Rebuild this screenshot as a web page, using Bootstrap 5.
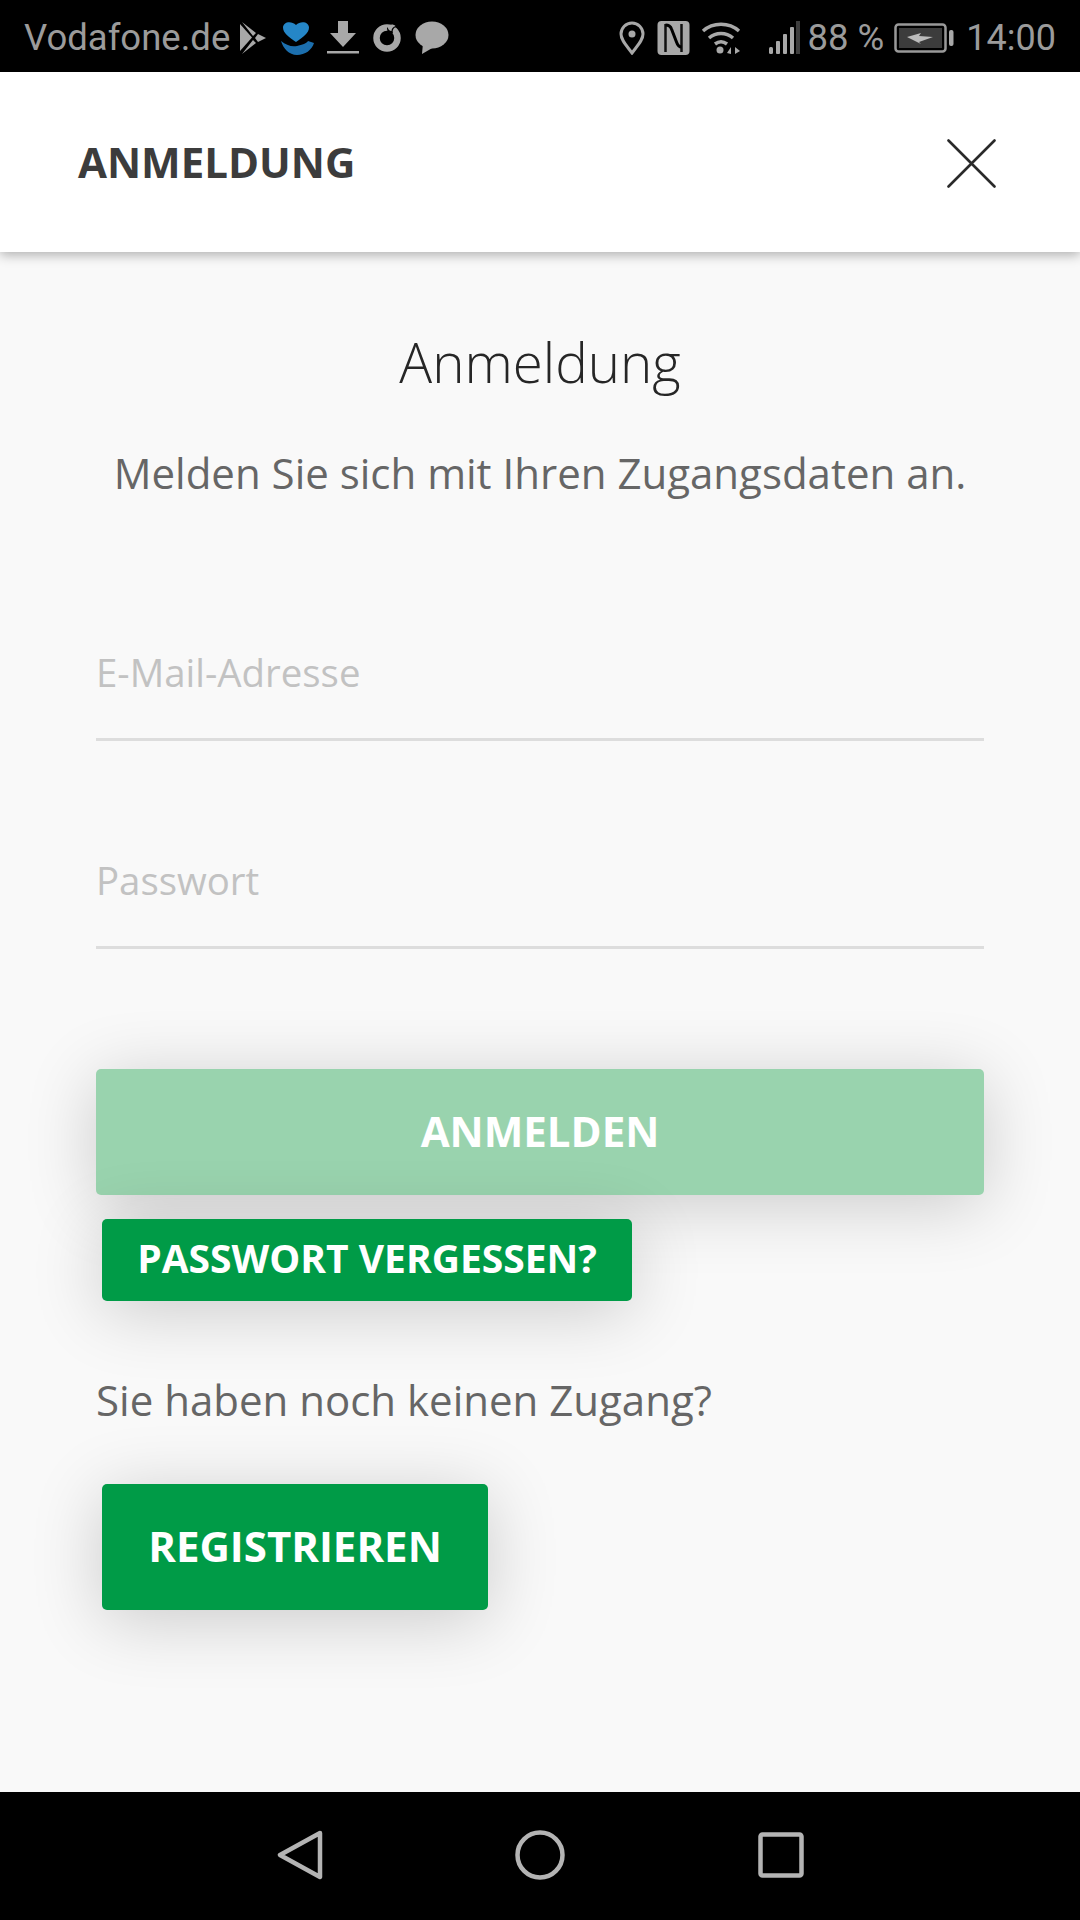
<!DOCTYPE html>
<html lang="de"><head><meta charset="utf-8"><title>Anmeldung</title>
<link href="https://cdn.jsdelivr.net/npm/bootstrap@5.3.0/dist/css/bootstrap.min.css" rel="stylesheet">
<style>
html,body{margin:0;height:1920px;overflow:hidden}
body{font-family:"Open Sans",sans-serif;background:#f9f9f9}
.app{height:1920px}
.sbar{height:72px;background:#000;color:#9b9b9b;font-family:Roboto,sans-serif;font-size:36.5px;padding:4px 24px 0;flex:none}
.sbar svg{display:block;flex:none}
.clk{font-size:36px}
.m8{margin-left:8px}.m9{margin-left:9px}.m10{margin-left:10px}.m11{margin-left:11px}.m12{margin-left:12px}.m13{margin-left:13px}.m14{margin-left:14px}.m27{margin-left:27px}
.topb{height:180px;background:#fff;box-shadow:0 3px 11px rgba(0,0,0,.3);padding:0 84px 0 78px;flex:none;position:relative;z-index:1}
.topb-t{font-size:42px;font-weight:700;color:#3c3c3c;line-height:1}
.closer{margin-top:2px}
.ctn{padding:0 96px;min-height:0}
.h-t{font-weight:300;font-size:54.7px;line-height:72px;color:#262626;margin:74px 0 0;text-align:center}
.h-s{font-size:42px;line-height:58px;color:#666;margin:46px 0 0;text-align:center;white-space:nowrap}
.fld{display:block;width:100%;height:109px;border:0;border-bottom:3px solid #ddd;background:transparent;padding:0 0 27px;font-size:38.4px;color:#333;outline:0;border-radius:0}
.fld::placeholder{color:#c2c2c2;opacity:1}
.f1{margin-top:130px}.f2{margin-top:99px}
.gbtn{border:0;color:#fff;font-weight:700;background:#009b47;border-radius:5px;display:flex;align-items:center;justify-content:center;padding:0 0 4px;box-shadow:0 10px 70px rgba(0,0,0,.19)}
.b-main{width:888px;height:126px;font-size:42px;margin-top:120px;background:#99d3ae}
.b-forgot{width:530px;height:82px;font-size:39px;margin:24px 0 0 6px}
.b-reg{width:386px;height:126px;font-size:42px;margin:0 0 0 6px}
.q-t{font-size:42px;line-height:58px;color:#666;margin:70px 0 55px}
.nbar{height:128px;background:#000;flex:none;padding-bottom:2px}
.nv2{margin-left:192px}.nv3{margin-left:193px}
</style></head><body>
<div class="app d-flex flex-column">
<div class="sbar d-flex align-items-center">
 <span>Vodafone.de</span>
 <svg class="m9" width="28" height="34" viewBox="0 0 28 34"><path d="M1 3l12 13.500L1 30z" fill="#a8a8a8"/><path d="M3 1l14 11-3 3zM19 13l8 4-8 4-3-4zM3 33l11-14 3 3z" fill="#a8a8a8"/></svg>
 <svg class="m12" width="36" height="36" viewBox="0 0 36 36"><path d="M17 22C10 17 4 13 4 7.500 4 2 12 0 17 5c5-5 13-3 13 2.500C30 13 24 17 17 22z" fill="#2586c7"/><path d="M2 21c5 4 10 6 16 5 5-1 10-3 11-5l6 2c-2 7-9 12-17 12C10 35 4 28 2 21z" fill="#1c6fae"/></svg>
 <svg class="m12" width="32" height="36" viewBox="0 0 32 36"><path d="M11 1h10v12h8L16 27 3 13h8z" fill="#a8a8a8"/><rect y="31" width="32" height="2.500" fill="#a8a8a8"/></svg>
 <svg class="m14" width="28" height="30" viewBox="0 0 28 30"><circle cx="14" cy="15" r="10.500" fill="none" stroke="#a8a8a8" stroke-width="6.500"/><path d="M14 5c3-3 7-3 10-1-3 0-5 3-4 6-3 2-6 0-6-5z" fill="#000"/><path d="M14.500 3c3-2 6-2 8 0-3 1-4 3-4 5-2 0-4-2-4-5z" fill="#a8a8a8"/></svg>
 <svg class="m14" width="34" height="34" viewBox="0 0 34 34"><ellipse cx="17" cy="14" rx="16.500" ry="13.500" fill="#a8a8a8"/><path d="M8 22l-1 11 12-7z" fill="#a8a8a8"/></svg>
 <svg class="ms-auto" width="26" height="34" viewBox="0 0 26 34"><path d="M13 32C7 24 2 19 2 13a11 11 0 0 1 22 0c0 6-5 11-11 19z" fill="none" stroke="#a8a8a8" stroke-width="3"/><circle cx="13" cy="13" r="3.500" fill="#a8a8a8"/></svg>
 <svg class="m12" width="33" height="34" viewBox="0 0 32 34"><rect width="32" height="34" rx="4" fill="#a8a8a8"/><path d="M8 3v28M24 3v28" stroke="#000" stroke-width="2.500" opacity=".9"/><path d="M8 4c3 0 5 1 6 4l5 13c1 3 3 5 5 5" fill="none" stroke="#000" stroke-width="3"/></svg>
 <svg class="m11" width="40" height="34" viewBox="0 0 40 34"><g fill="none" stroke="#a8a8a8" stroke-width="3.500"><path d="M2 10c10-9 26-9 36 0"/><path d="M8 17c7-6 17-6 24 0"/><path d="M14 23c4-3 8-3 12 0"/></g><circle cx="19" cy="29" r="3.500" fill="#a8a8a8"/><path d="M26 32l4-6v7zM34 26l5 4-5 3z" fill="#a8a8a8"/></svg>
 <svg class="m27" width="32" height="34" viewBox="0 0 32 34"><g fill="#a8a8a8"><rect x="1" y="26" width="4" height="7" rx="1.500"/><rect x="8" y="20" width="4" height="13" rx="1"/><rect x="15" y="13" width="4" height="20" rx="1"/><rect x="22" y="6" width="4" height="27" rx="1"/></g><rect x="28" y="0" width="4" height="33" fill="#3e3e3e"/></svg>
 <span class="m8">88 %</span>
 <svg class="m10" width="60" height="30" viewBox="0 0 60 30"><rect x="1.500" y="1.500" width="50" height="27" rx="3" fill="#000" stroke="#999" stroke-width="2.500"/><rect x="5" y="5" width="43" height="20" fill="#3c3c3c"/><rect x="55" y="7" width="4.500" height="16" rx="2" fill="#a8a8a8"/><path d="M13 14l14-4-2 3 14 1-14 5 2 2z" fill="#bbb"/></svg>
 <span class="m12 clk">14:00</span>
</div>
<header class="topb d-flex align-items-center justify-content-between">
 <div class="topb-t">ANMELDUNG</div>
 <svg class="closer" width="49" height="49" viewBox="0 0 49 49" aria-label="Schließen"><path d="M1.500 1.500l46 46M47.500 1.500l-46 46" stroke="#2a2a2a" stroke-width="2.600" stroke-linecap="round"/></svg>
</header>
<main class="ctn flex-grow-1">
 <h1 class="h-t">Anmeldung</h1>
 <p class="h-s">Melden Sie sich mit Ihren Zugangsdaten an.</p>
 <input class="fld f1" type="text" placeholder="E-Mail-Adresse">
 <input class="fld f2" type="password" placeholder="Passwort">
 <button class="gbtn b-main">ANMELDEN</button>
 <button class="gbtn b-forgot">PASSWORT VERGESSEN?</button>
 <p class="q-t">Sie haben noch keinen Zugang?</p>
 <button class="gbtn b-reg">REGISTRIEREN</button>
</main>
<nav class="nbar d-flex align-items-center justify-content-center">
 <svg width="46" height="50" viewBox="0 0 46 50"><path d="M43 3L3 25l40 22z" fill="none" stroke="#b4b4b4" stroke-width="4.500" stroke-linejoin="round"/></svg>
 <svg class="nv2" width="50" height="50" viewBox="0 0 50 50"><circle cx="25" cy="25" r="22.500" fill="none" stroke="#b4b4b4" stroke-width="4.500"/></svg>
 <svg class="nv3" width="46" height="46" viewBox="0 0 46 46"><rect x="2.500" y="2.500" width="41" height="41" rx="2" fill="none" stroke="#b4b4b4" stroke-width="4.500"/></svg>
</nav>
</div>
</body></html>
